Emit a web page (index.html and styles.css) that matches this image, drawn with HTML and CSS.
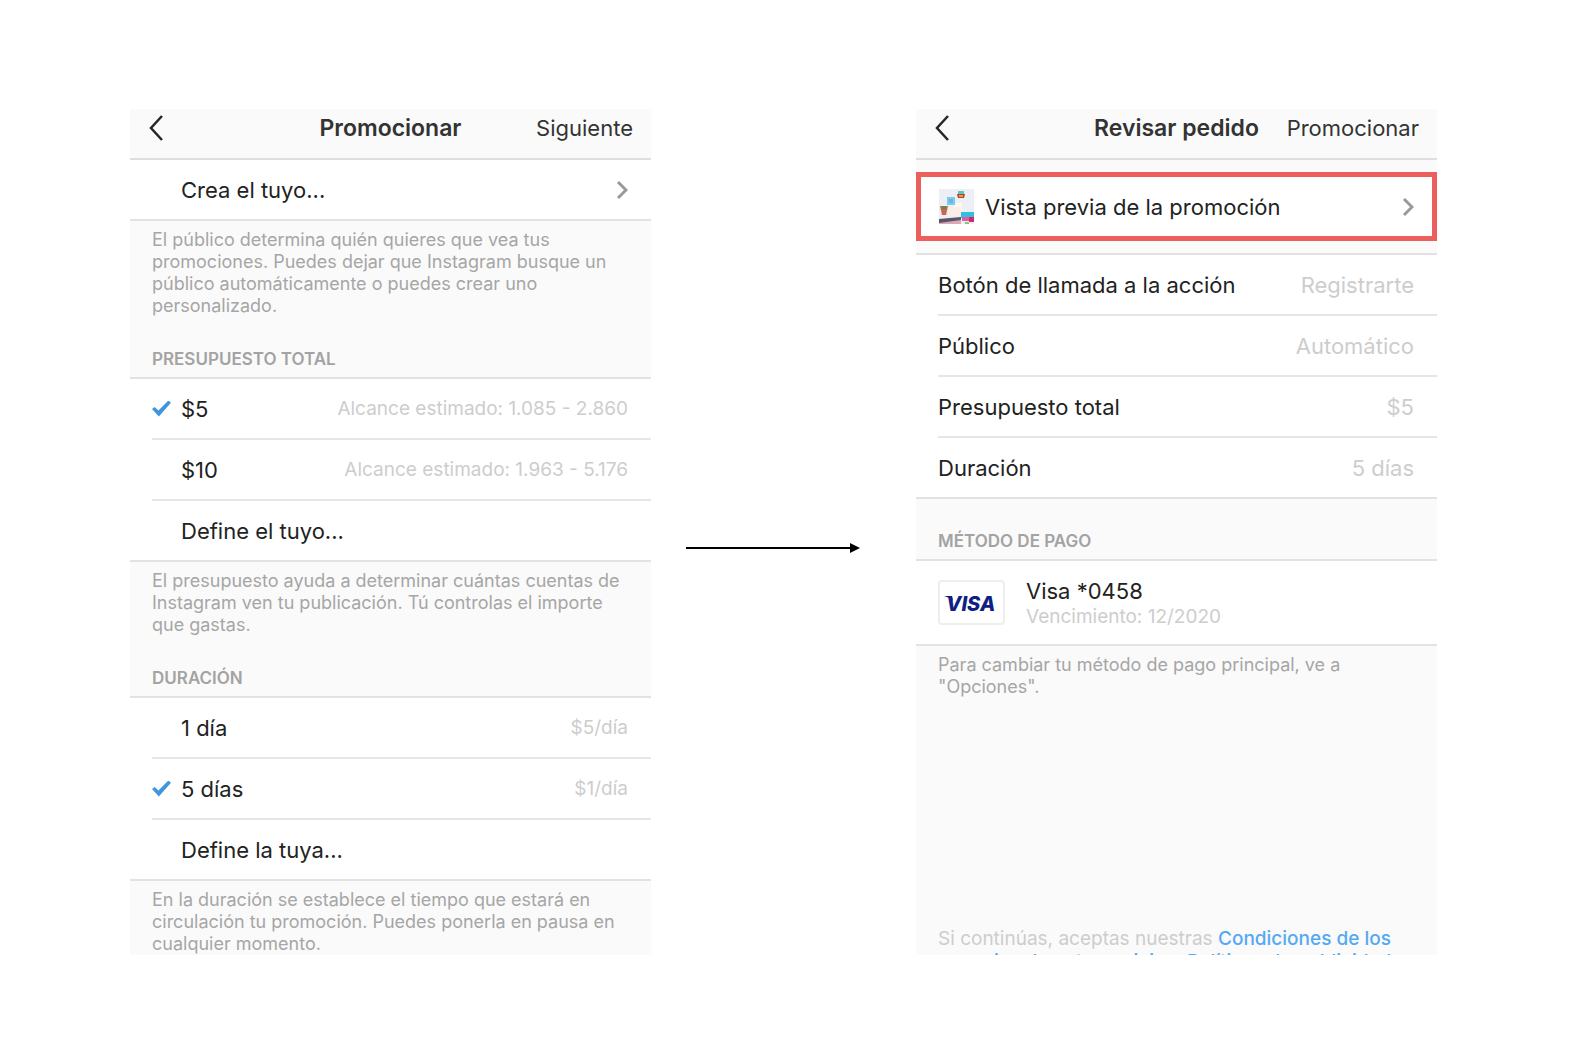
FILE: index.html
```html
<!DOCTYPE html>
<html lang="es">
<head>
    <meta charset="UTF-8">
    <meta name="viewport" content="width=device-width, initial-scale=1.0">
    <title>Promocionar</title>
    <link rel="stylesheet" href="styles.css">
</head>
<body>
    <main class="flow">

        <!-- step 1: audience, budget and duration -->
        <section class="screen">
            <header class="topbar">
                <button class="back" type="button" aria-label="Atrás">
                    <svg width="16" height="28" viewBox="0 0 16 28"><path d="M14 2 L3 14 L14 26" /></svg>
                </button>
                <h1 class="title">Promocionar</h1>
                <button class="action" type="button">Siguiente</button>
            </header>

            <div class="group">
                <button class="row indent" type="button">
                    <span>Crea el tuyo...</span>
                    <svg class="chevron" width="12" height="20" viewBox="0 0 12 20"><path d="M2 2 L10 10 L2 18" /></svg>
                </button>
            </div>
            <p class="note">El público determina quién quieres que vea tus promociones. Puedes dejar que Instagram busque un público automáticamente o puedes crear uno personalizado.</p>

            <h2 class="heading">PRESUPUESTO TOTAL</h2>
            <div class="group">
                <label class="row">
                    <input class="check" type="radio" name="budget" checked>
                    <span>$5</span>
                    <span class="hint">Alcance estimado: 1.085 - 2.860</span>
                </label>
                <label class="row">
                    <input class="check" type="radio" name="budget">
                    <span>$10</span>
                    <span class="hint">Alcance estimado: 1.963 - 5.176</span>
                </label>
                <button class="row indent" type="button">Define el tuyo...</button>
            </div>
            <p class="note">El presupuesto ayuda a determinar cuántas cuentas de Instagram ven tu publicación. Tú controlas el importe que gastas.</p>

            <h2 class="heading">DURACIÓN</h2>
            <div class="group">
                <label class="row">
                    <input class="check" type="radio" name="days">
                    <span>1 día</span>
                    <span class="hint">$5/día</span>
                </label>
                <label class="row">
                    <input class="check" type="radio" name="days" checked>
                    <span>5 días</span>
                    <span class="hint">$1/día</span>
                </label>
                <button class="row indent" type="button">Define la tuya...</button>
            </div>
            <p class="note">En la duración se establece el tiempo que estará en circulación tu promoción. Puedes ponerla en pausa en cualquier momento.</p>
        </section>

        <div class="arrow">
            <svg width="174" height="12" viewBox="0 0 174 12">
                <path d="M0 6 H166" stroke="#000" stroke-width="2" />
                <path d="M164 1 L174 6 L164 11 Z" />
            </svg>
        </div>

        <!-- step 2: order review -->
        <section class="screen">
            <header class="topbar">
                <button class="back" type="button" aria-label="Atrás">
                    <svg width="16" height="28" viewBox="0 0 16 28"><path d="M14 2 L3 14 L14 26" /></svg>
                </button>
                <h1 class="title">Revisar pedido</h1>
                <button class="action" type="button">Promocionar</button>
            </header>

            <button class="preview" type="button">
                <svg class="thumb" width="35" height="35" viewBox="0 0 35 35">
                    <rect width="35" height="35" fill="#eeeef6" />
                    <rect x="14" y="14" width="9" height="12" fill="#fbf8f4" />
                    <rect x="8" y="8" width="8" height="8" fill="#7ccbec" />
                    <rect x="10" y="10" width="4" height="4" fill="#63b9e0" />
                    <rect x="19" y="2" width="6" height="3" fill="#5fc4c4" />
                    <path d="M18 5 H26 L25 9 H19 Z" fill="#a8472c" />
                    <rect x="20" y="6" width="4" height="2" fill="#e5a13c" />
                    <path d="M1 17 H9 L7 26 H3 Z" fill="#c9694c" />
                    <rect x="3" y="17" width="4" height="3" fill="#5e8a5b" />
                    <rect x="9" y="18" width="13" height="9" fill="#f9efe6" />
                    <path d="M0 30 L22 28 V32 L0 35 Z" fill="#5b5566" />
                    <path d="M0 34 L22 31 V35 H0 Z" fill="#d9a9b9" />
                    <rect x="22" y="23" width="13" height="6" fill="#2fc0e0" />
                    <rect x="23" y="28" width="7" height="4" fill="#e05aa8" />
                    <rect x="30" y="28" width="5" height="5" fill="#d8266b" />
                    <rect x="26" y="33" width="4" height="2" fill="#8cc46a" />
                </svg>
                <span>Vista previa de la promoción</span>
                <svg class="chevron" width="12" height="20" viewBox="0 0 12 20"><path d="M2 2 L10 10 L2 18" /></svg>
            </button>

            <div class="group">
                <div class="row"><span>Botón de llamada a la acción</span><span class="value">Registrarte</span></div>
                <div class="row"><span>Público</span><span class="value">Automático</span></div>
                <div class="row"><span>Presupuesto total</span><span class="value">$5</span></div>
                <div class="row"><span>Duración</span><span class="value">5 días</span></div>
            </div>

            <h2 class="heading">MÉTODO DE PAGO</h2>
            <div class="group">
                <div class="row card-row">
                    <svg class="card" width="67" height="45" viewBox="0 0 67 45">
                        <rect x="1" y="1" width="65" height="43" rx="3" fill="#fff" stroke="#eee" stroke-width="2" />
                        <path d="M6 16 H14 L15 21 C12 18 9 17 6 16 Z" fill="#101f82" />
                        <text x="8" y="31">VISA</text>
                    </svg>
                    <div>
                        <div class="card-name">Visa *0458</div>
                        <div class="card-date">Vencimiento: 12/2020</div>
                    </div>
                </div>
            </div>
            <p class="note">Para cambiar tu método de pago principal, ve a "Opciones".</p>

            <p class="terms">Si continúas, aceptas nuestras <a href="#">Condiciones de los anuncios de autoservicio</a> y <a href="#">Políticas de publicidad</a>.</p>
        </section>

    </main>
</body>
</html>
```
FILE: styles.css
```css
* {
    box-sizing: border-box;
}
body {
    margin: 0;
    background-color: #fff;
    font-family: Inter, "Liberation Sans", sans-serif;
    color: #222;
}
h1, h2, p {
    margin: 0;
}
button {
    font: inherit;
    color: inherit;
    background: none;
    border: none;
    padding: 0;
    text-align: left;
    cursor: pointer;
}
.flow {
    display: grid;
    grid-template-columns: 1fr 265px 1fr;
    padding: 109px 138px 104px 130px;
}
.screen {
    display: flex;
    flex-direction: column;
    background-color: #fafafa;
    overflow: hidden;
}

/* top bar */
.topbar {
    display: grid;
    grid-template-columns: 1fr auto 1fr;
    align-items: center;
    height: 51px;
    padding: 0 18px 12px;
    border-bottom: 2px solid #dedede;
    font-size: 22px;
    color: #333;
}
.title {
    font-size: 23px;
    font-weight: 600;
}
.action {
    justify-self: end;
}
.back {
    justify-self: start;
    height: 28px;
}
.back svg {
    display: block;
    fill: none;
    stroke: #262626;
    stroke-width: 2.5;
}

/* lists */
.group {
    background-color: #fff;
    border-bottom: 2px solid #e2e2e2;
}
.heading + .group {
    border-top: 2px solid #e2e2e2;
}
.row {
    display: flex;
    align-items: center;
    width: calc(100% - 22px);
    height: 61px;
    margin-left: 22px;
    padding-right: 23px;
    border-bottom: 2px solid #e6e6e6;
    font-size: 22px;
}
.row:last-child {
    height: 59px;
    border-bottom: none;
}
.indent {
    padding-left: 29px;
}
.check {
    appearance: none;
    width: 19px;
    height: 16px;
    margin: 0 10px 0 0;
}
.check:checked {
    background-color: #4295dd;
    clip-path: polygon(0 53%, 14% 40%, 34% 62%, 86% 0, 100% 14%, 36% 100%);
}
.hint,
.value {
    margin-left: auto;
    color: #cdcdcd;
}
.hint {
    font-size: 19px;
}
.chevron {
    margin-left: auto;
    fill: none;
    stroke: #999;
    stroke-width: 3;
}
.note {
    padding: 8px 22px 0;
    font-size: 18px;
    line-height: 22px;
    color: #a6a6a6;
}
.heading {
    padding: 31px 22px 7px;
    font-size: 17px;
    line-height: 22px;
    font-weight: 600;
    color: #a3a3a3;
}

/* review order */
.preview {
    display: flex;
    align-items: center;
    gap: 11px;
    height: 69px;
    margin: 12px 0;
    padding: 0 18px;
    background-color: #fff;
    border: 5px solid #eb605d;
    font-size: 22px;
}
.preview + .group {
    border-top: 2px solid #e2e2e2;
}
.row.card-row {
    height: 83px;
}
.card {
    margin-right: 21px;
}
.card text {
    font-size: 20px;
    font-weight: 800;
    font-style: italic;
    fill: #101f82;
}
.card-name {
    line-height: 28px;
}
.card-date {
    font-size: 19px;
    line-height: 24px;
    color: #cdcdcd;
}
.terms {
    height: 28px;
    margin-top: auto;
    padding: 0 22px;
    font-size: 19px;
    line-height: 23px;
    color: #cdcdcd;
}
.terms a {
    color: #55a9f3;
    font-weight: 500;
    text-decoration: none;
}

.arrow {
    display: flex;
    align-items: center;
    padding: 32px 0 0 35px;
}
```
